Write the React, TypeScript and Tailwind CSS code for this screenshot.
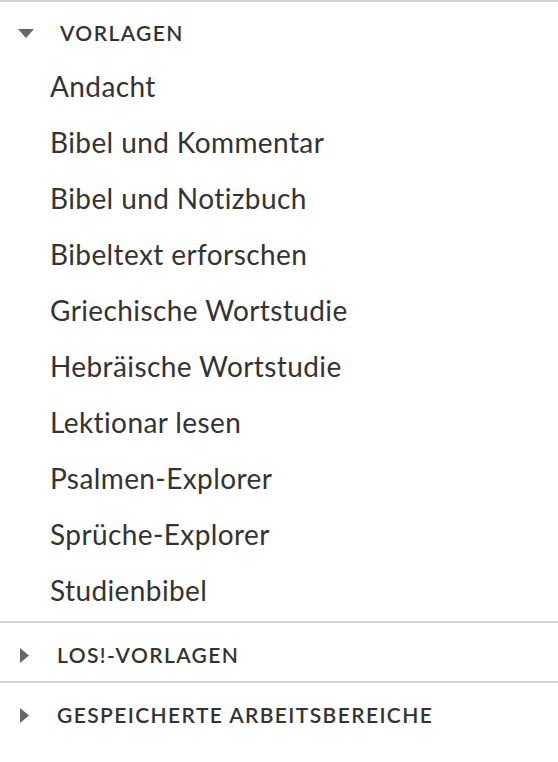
import React from "react";

const templates = [
  "Andacht",
  "Bibel und Kommentar",
  "Bibel und Notizbuch",
  "Bibeltext erforschen",
  "Griechische Wortstudie",
  "Hebräische Wortstudie",
  "Lektionar lesen",
  "Psalmen-Explorer",
  "Sprüche-Explorer",
  "Studienbibel",
];

const Caret: React.FC<{ open?: boolean }> = ({ open }) =>
  open ? (
    <svg width="16" height="9" viewBox="0 0 16 9" className="shrink-0">
      <path d="M0 0 H16 L8 9 Z" fill="#666" />
    </svg>
  ) : (
    <svg width="9" height="15" viewBox="0 0 9 15" className="shrink-0">
      <path d="M0 0 L9 7.5 L0 15 Z" fill="#666" />
    </svg>
  );

const SectionHeader: React.FC<{ title: string; open?: boolean }> = ({ title, open }) => (
  <div className={open ? "flex h-[56px] items-center pt-[6px]" : "flex h-[58px] items-center pt-[6px]"}>
    <div className={open ? "flex w-[60px] pl-[18px]" : "flex w-[57px] pl-[20px]"}>
      <Caret open={open} />
    </div>
    <span className="text-[21px] font-semibold uppercase tracking-[1.4px] text-[#333]">{title}</span>
  </div>
);

export default function App() {
  return (
    <div className="min-h-screen w-[558px] bg-white font-['Lato',sans-serif] [font-variant-ligatures:none]">
      <div className="border-t-2 border-[#d4d4d4]">
        <SectionHeader title="Vorlagen" open />
        <ul className="pb-[3px]">
          {templates.map((t) => (
            <li key={t} className="flex h-[56px] items-center pl-[50px] text-[28px] tracking-[0.4px] text-[#333]">
              {t}
            </li>
          ))}
        </ul>
      </div>
      <div className="border-t-2 border-[#d4d4d4]">
        <SectionHeader title="Los!-Vorlagen" />
      </div>
      <div className="border-t-2 border-[#d4d4d4]">
        <SectionHeader title="Gespeicherte Arbeitsbereiche" />
      </div>
    </div>
  );
}
